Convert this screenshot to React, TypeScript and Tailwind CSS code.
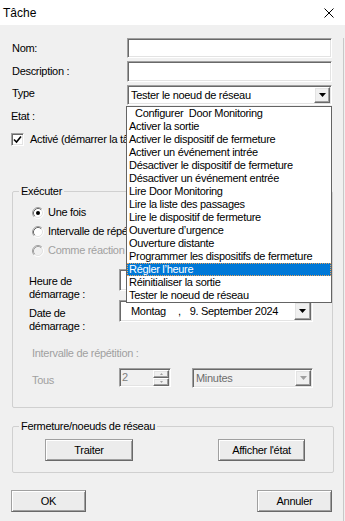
import React from 'react';

const sunken =
  'border border-t-[#a0a0a0] border-l-[#a0a0a0] border-b-white border-r-white shadow-[inset_1px_1px_0_#696969,inset_-1px_-1px_0_#e3e3e3]';
const raised =
  'border border-t-white border-l-white border-b-[#696969] border-r-[#696969] shadow-[inset_-1px_-1px_0_#a0a0a0,inset_1px_1px_0_#e3e3e3] bg-[#f0f0f0]';
const button =
  'h-[22px] border border-[#a0a0a0] border-b-[#696969] border-r-[#696969] shadow-[inset_1px_1px_0_#fff,inset_-1px_-1px_0_#a0a0a0] bg-[#ececec] flex items-center justify-center';

function Arrow({ gray }: { gray?: boolean }) {
  return (
    <svg width="7" height="4" viewBox="0 0 7 4">
      <path d="M0 0H7L3.5 4Z" fill={gray ? '#a0a0a0' : '#000'} />
    </svg>
  );
}

function Radio({ checked, disabled }: { checked?: boolean; disabled?: boolean }) {
  return (
    <svg width="12" height="12" viewBox="0 0 12 12" className="shrink-0">
      <circle cx="6" cy="6" r="5" fill={disabled ? '#f0f0f0' : '#fff'} />
      <path d="M2.11 9.89A5.5 5.5 0 0 1 9.89 2.11" fill="none" stroke="#a0a0a0" />
      <path d="M9.89 2.11A5.5 5.5 0 0 1 2.11 9.89" fill="none" stroke="#fff" />
      <path d="M2.82 9.18A4.5 4.5 0 0 1 9.18 2.82" fill="none" stroke={disabled ? '#a0a0a0' : '#696969'} />
      <path d="M9.18 2.82A4.5 4.5 0 0 1 2.82 9.18" fill="none" stroke="#e3e3e3" />
      {checked && <circle cx="6" cy="6" r="2" fill="#000" />}
    </svg>
  );
}

const items = [
  'Activer la sortie',
  'Activer le dispositif de fermeture',
  'Activer un événement intrée',
  'Désactiver le dispositif de fermeture',
  'Désactiver un événement entrée',
  'Lire Door Monitoring',
  'Lire la liste des passages',
  'Lire le dispositif de fermeture',
  'Ouverture d’urgence',
  'Ouverture distante',
  'Programmer les dispositifs de fermeture',
  'Régler l’heure',
  'Réinitialiser la sortie',
  'Tester le noeud de réseau',
];

export default function App() {
  return (
    <div className="relative w-[345px] h-[521px] bg-[#f0f0f0] overflow-hidden text-[11px] tracking-[-0.3px] text-black font-['Liberation_Sans',Arial,sans-serif]">
      {/* Title bar */}
      <div className="h-[25px] bg-white flex items-center justify-between pl-[3px] pr-[11px]">
        <span className="text-[12px] tracking-normal">Tâche</span>
        <svg width="10" height="10" viewBox="0 0 10 10">
          <path d="M0.5 0.5L9.5 9.5M9.5 0.5L0.5 9.5" stroke="#000" strokeWidth="1" />
        </svg>
      </div>

      <div className="w-[344px] h-[496px] border-r border-[#c8c8c8]">
        {/* Fields */}
        <div className="mt-[13px] grid grid-cols-[127px_205px] grid-rows-[20px_21px_20px] gap-y-[3px] items-center">
          <span className="pl-[12px]">Nom:</span>
          <div className={`h-[20px] bg-white ${sunken}`} />
          <span className="pl-[12px]">Description :</span>
          <div className={`h-[21px] bg-white ${sunken}`} />
          <span className="pl-[12px] self-start">Type</span>
          <div className={`h-[20px] bg-white flex items-center justify-between pl-[3px] pr-[1px] ${sunken}`}>
            <span>Tester le noeud de réseau</span>
            <div className={`w-[16px] h-[16px] flex items-center justify-center ${raised}`}>
              <Arrow />
            </div>
          </div>
        </div>

        <div className="mt-[5px] h-[13px] leading-[13px] pl-[11px]">Etat :</div>

        <div className="mt-[10px] h-[13px] w-[126px] overflow-hidden flex items-center pl-[11px] gap-[6px] whitespace-nowrap">
          <div className={`w-[13px] h-[13px] shrink-0 bg-white flex items-center justify-center ${sunken}`}>
            <svg width="9" height="9" viewBox="0 0 9 9">
              <path d="M1 4.5L3.5 7L8 1.5" fill="none" stroke="#000" strokeWidth="1.6" />
            </svg>
          </div>
          <span>Activé (démarrer la tâche)</span>
        </div>

        {/* Exécuter */}
        <fieldset className="mt-[39px] ml-[12px] w-[321px] h-[223px] border border-[#d0d0d0] rounded-[2px]">
          <legend className="ml-[6px] px-[2px] h-[13px] leading-[13px]">Exécuter</legend>
          <div className="mt-[8px] h-[13px] flex items-center gap-[4px] pl-[19px]">
            <Radio checked />
            <span>Une fois</span>
          </div>
          <div className="mt-[6px] h-[13px] w-[113px] overflow-hidden flex items-center gap-[4px] pl-[19px] whitespace-nowrap">
            <Radio />
            <span>Intervalle de répétition</span>
          </div>
          <div className="mt-[6px] h-[13px] w-[113px] overflow-hidden flex items-center gap-[4px] pl-[19px] whitespace-nowrap text-[#a0a0a0]">
            <Radio disabled />
            <span>Comme réaction à un événement</span>
          </div>

          <div className="mt-[12px] h-[22px] flex items-start">
            <div className="w-[106px] shrink-0 pl-[16px] pt-[6px] leading-[13px]">
              Heure de<br />démarrage :
            </div>
            <div className={`w-[130px] h-[22px] bg-white ${sunken}`} />
          </div>
          <div className="mt-[9px] h-[22px] flex items-start">
            <div className="w-[106px] shrink-0 pl-[16px] pt-[7px] leading-[13px]">
              Date de<br />démarrage :
            </div>
            <div className={`w-[194px] h-[22px] bg-white flex items-center pr-[1px] ${sunken}`}>
              <span className="ml-[11px]">Montag</span>
              <span className="ml-[12px]">,</span>
              <span className="ml-[9px]">9. September 2024</span>
              <div className={`ml-auto w-[17px] h-[18px] flex items-center justify-center ${raised}`}>
                <Arrow />
              </div>
            </div>
          </div>

          <div className="mt-[25px] h-[13px] leading-[13px] pl-[19px] text-[#a0a0a0]">Intervalle de répétition :</div>

          <div className="mt-[8px] h-[20px] flex items-start">
            <span className="w-[106px] shrink-0 pl-[19px] pt-[6px] leading-[13px] text-[#a0a0a0]">Tous</span>
            <div className={`w-[52px] h-[19px] bg-[#f0f0f0] flex items-center justify-between pl-[2px] pr-[1px] ${sunken}`}>
              <span className="text-[#808080]">2</span>
              <div className="flex flex-col">
                <div className={`w-[16px] h-[8px] flex items-center justify-center ${raised}`}>
                  <svg width="3" height="2" viewBox="0 0 3 2"><path d="M0 2H3L1.5 0Z" fill="#a0a0a0" /></svg>
                </div>
                <div className={`w-[16px] h-[8px] flex items-center justify-center ${raised}`}>
                  <svg width="3" height="2" viewBox="0 0 3 2"><path d="M0 0H3L1.5 2Z" fill="#a0a0a0" /></svg>
                </div>
              </div>
            </div>
            <div className={`ml-[21px] w-[121px] h-[20px] bg-[#f0f0f0] flex items-center justify-between pl-[3px] pr-[1px] ${sunken}`}>
              <span className="text-[#6d6d6d]">Minutes</span>
              <div className={`w-[16px] h-[16px] flex items-center justify-center ${raised}`}>
                <Arrow gray />
              </div>
            </div>
          </div>
        </fieldset>

        {/* Fermeture */}
        <fieldset className="mt-[12px] ml-[12px] w-[322px] h-[53px] border border-[#d0d0d0] rounded-[2px]">
          <legend className="ml-[6px] px-[2px] h-[13px] leading-[13px]">Fermeture/noeuds de réseau</legend>
          <div className="mt-[6px] flex">
            <button className={`ml-[32px] w-[88px] ${button}`}>Traiter</button>
            <button className={`ml-[85px] w-[87px] ${button}`}>Afficher l'état</button>
          </div>
        </fieldset>

        <div className="mt-[17px] flex justify-between pl-[11px] pr-[11px]">
          <button className={`w-[75px] ${button}`}>OK</button>
          <button className={`w-[75px] ${button}`}>Annuler</button>
        </div>
      </div>

      {/* Open dropdown list */}
      <div className="absolute left-[126px] top-[106px] w-[206px] h-[197px] bg-white border border-[#646464]">
        <div className="h-[13px] leading-[13px] pl-[8px] whitespace-pre">Configurer  Door Monitoring</div>
        {items.map((it) =>
          it === 'Régler l’heure' ? (
            <div key={it} className="h-[13px] leading-[11px] pl-[1px] bg-[#0078d7] text-white border border-dotted border-[#e8a25a]">
              {it}
            </div>
          ) : (
            <div key={it} className="h-[13px] leading-[13px] pl-[2px] whitespace-nowrap">
              {it}
            </div>
          )
        )}
      </div>
    </div>
  );
}
